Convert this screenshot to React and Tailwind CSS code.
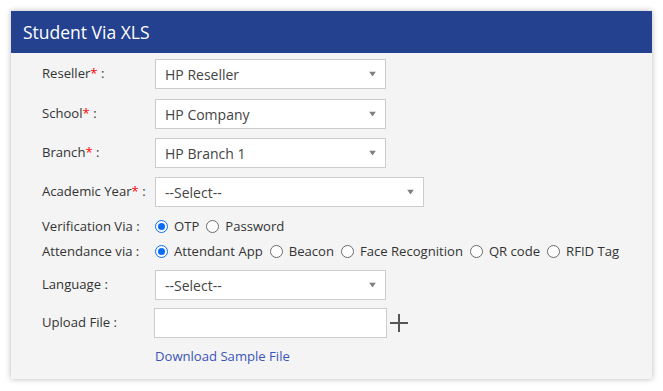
import React from "react";

function Arrow() {
  return (
    <svg width="7" height="5" viewBox="0 0 7 5" className="absolute right-[9px] top-1/2 -translate-y-1/2">
      <path d="M0 0 L7 0 L3.5 5 Z" fill="#808080" />
    </svg>
  );
}

function Select({ value, w = "w-[231px]" }) {
  return (
    <div className={`relative h-[30px] ${w} border border-[#cccccc] bg-white flex items-center pl-[9px] text-[14px] text-[#444]`}>
      {value}
      <Arrow />
    </div>
  );
}

function Label({ children, req }) {
  return (
    <div className="w-[113px] shrink-0 text-[13.1px] text-[#333]">
      {children}
      {req && <span className="text-[#ff0000]">*</span>} :
    </div>
  );
}

function Radio({ checked, label }) {
  return (
    <label className="flex items-center mr-[7px]">
      {checked ? (
        <span className="w-[13px] h-[13px] rounded-full border border-[#0a6cf5] bg-white flex items-center justify-center">
          <span className="w-[7px] h-[7px] rounded-full bg-[#0a6cf5]" />
        </span>
      ) : (
        <span className="w-[13px] h-[13px] rounded-full border border-[#6b6b6b] bg-white" />
      )}
      <span className="ml-[6px] text-[13.1px] text-[#333]">{label}</span>
    </label>
  );
}

export default function App() {
  return (
    <div className="w-[663px] h-[391px] bg-white p-[11px]" style={{ fontFamily: '"Open Sans", sans-serif' }}>
      <div className="w-[641px] h-[368px] bg-[#f4f4f4] shadow-[0_0_6px_rgba(0,0,0,0.28)] flex flex-col">
        <div className="h-[42px] bg-[#23418f] flex items-center pl-[12px] text-white text-[17.5px]">Student Via XLS</div>
        <div className="flex flex-col pl-[31px]">
          <div className="flex items-center mt-[6px]">
            <Label req>Reseller</Label>
            <Select value="HP Reseller" />
          </div>
          <div className="flex items-center mt-[10px]">
            <Label req>School</Label>
            <Select value="HP Company" />
          </div>
          <div className="flex items-center mt-[9px]">
            <Label req>Branch</Label>
            <Select value="HP Branch 1" />
          </div>
          <div className="flex items-center mt-[9px]">
            <Label req>Academic Year</Label>
            <Select value="--Select--" w="w-[269px]" />
          </div>
          <div className="flex items-center mt-[10px] h-[20px]">
            <Label>Verification Via</Label>
            <Radio checked label="OTP" />
            <Radio label="Password" />
          </div>
          <div className="flex items-center mt-[5px] h-[20px]">
            <Label>Attendance via</Label>
            <Radio checked label="Attendant App" />
            <Radio label="Beacon" />
            <Radio label="Face Recognition" />
            <Radio label="QR code" />
            <Radio label="RFID Tag" />
          </div>
          <div className="flex items-center mt-[8px]">
            <Label>Language</Label>
            <Select value="--Select--" />
          </div>
          <div className="flex items-center mt-[8px]">
            <div className="w-[112px] shrink-0 text-[13.1px] text-[#333]">Upload File :</div>
            <div className="h-[30px] w-[233px] border border-[#cccccc] bg-white" />
            <svg width="18" height="18" viewBox="0 0 18 18" className="ml-[3px]">
              <path d="M9 0 V18 M0 9 H18" stroke="#555" strokeWidth="2" />
            </svg>
          </div>
          <div className="mt-[9px] h-[20px] flex items-center pl-[113px] text-[13.1px] text-[#3a55b8]">Download Sample File</div>
        </div>
      </div>
    </div>
  );
}
